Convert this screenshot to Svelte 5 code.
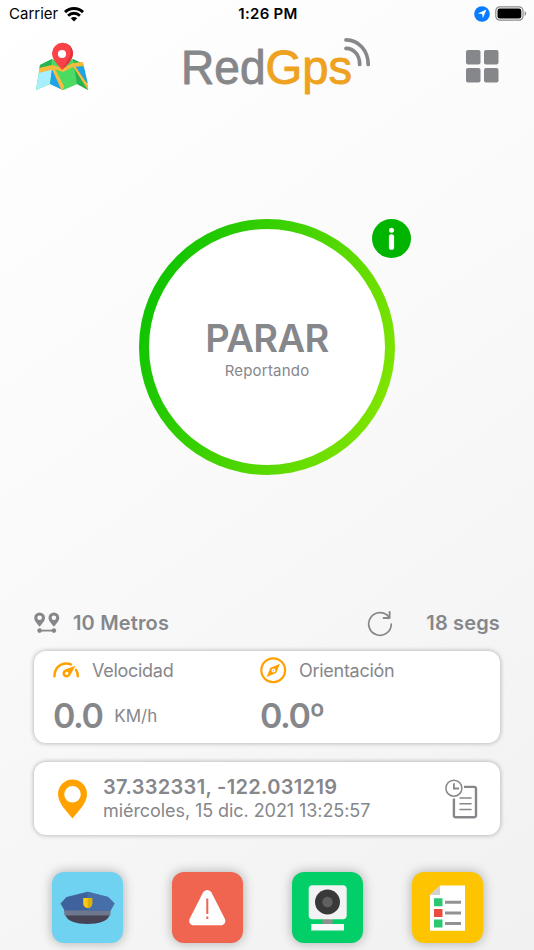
<script lang="ts">
  /** Tracker home — reporting toggle, current position and quick actions. */
  let reporting = $state(true);

  const distance = '10 Metros';
  const elapsed = '18 segs';
  const position = '37.332331, -122.031219';
  const date = 'miércoles, 15 dic. 2021 13:25:57';

  const actions = [
    { id: 'police', label: 'Policía', color: '#6fd2f0' },
    { id: 'alert', label: 'Alerta', color: '#f0654f' },
    { id: 'camera', label: 'Cámara', color: '#03cf69' },
    { id: 'tasks', label: 'Tareas', color: '#ffc400' },
  ];
</script>

<div class="screen">
  <div class="status">
    <div class="side">
      <span class="carrier">Carrier</span>
      <svg width="20" height="15" viewBox="0 0 20 15" fill="none" stroke="#000" stroke-width="2.9">
        <path d="M1 5.1a13 13 0 0 1 18 0" />
        <path d="M4.1 8.7a8.500 8.500 0 0 1 11.800 0" />
        <path d="M10 14.500 6.800 11.300a4.600 4.600 0 0 1 6.400 0z" fill="#000" stroke="none" />
      </svg>
    </div>
    <span class="time">1:26 PM</span>
    <div class="side right">
      <svg width="16" height="16" viewBox="0 0 16 16">
        <circle cx="8" cy="8" r="7.8" fill="#087cff" />
        <path d="M12.5 3.6 8.8 12.3 8.2 8.1 3.7 7.4z" fill="#fff" />
      </svg>
      <svg width="32" height="16" viewBox="0 0 32 16">
        <rect x=".8" y=".8" width="27.2" height="13.4" rx="4" fill="none" stroke="#8b8b8b" stroke-width="1.2" />
        <rect x="2.5" y="2.5" width="23.8" height="10" rx="2.3" />
        <path d="M29.6 5.2c2 .8 2 3.8 0 4.6z" fill="#8b8b8b" />
      </svg>
    </div>
  </div>

  <header>
    <button aria-label="Mapa">
      <svg width="54" height="50" viewBox="0 0 54 50">
        <path d="M5 23 17 17 28 22 38 17 48 22 53 48 42 42 28 48 15 42 1 48z" fill="#4cdb62" />
        <path d="M5 23 17 17 16 25 4 29z" fill="#27b351" />
        <path d="M4 30 17 27 15 42 1 48z" fill="#a7efff" />
        <path d="M17 27 28 48 15 42z" fill="#1ea2e9" />
        <path d="M28 22 38 17 42 42 28 48z" fill="#4cdb62" />
        <path d="M38 17 48 22 53 48 42 42z" fill="#27b351" />
        <path d="M39 24 49 25 53 42z" fill="#1ea2e9" />
        <path d="M4 26 17 23 28 26 38 21 48 20 49 24 38 25 28 30 19 27 4 31z" fill="#f8bb3c" />
        <path d="M16 25 19 25 29 44 28 48 26 47zM37 23 40 24 53 43V48z" fill="#f8bb3c" />
        <path d="M27 28C24 24 17 18 17 11.300a10.500 10.500 0 0 1 21 0C38 18 30 24 27 28z" fill="#fb4248" />
        <path d="M30 1.200c6.500 2.500 7.500 10.500 3 16.500l-6 10.300c7-6 11-11 11-16.700 0-5-3-9-8-10.100z" fill="#df343d" />
        <circle cx="27" cy="12" r="4.100" fill="#fff" />
      </svg>
    </button>

    <svg class="logo" width="194" height="62" viewBox="0 0 194 62">
      <text x="1" y="48.300" textLength="84.500" lengthAdjust="spacingAndGlyphs" fill="#86878a" stroke="#86878a">Red</text>
      <text x="85.500" y="48.300" textLength="86.500" lengthAdjust="spacingAndGlyphs" fill="#eea21f" stroke="#eea21f">Gps</text>
      <g fill="none" stroke="#86878a" stroke-width="3.700" stroke-linecap="round">
        <path d="M166 12.400C174 12.400 179.700 19 179.700 28.500" />
        <path d="M166 3.900C179 3.900 188.200 15 188.200 28.500" />
      </g>
    </svg>

    <button aria-label="Menú">
      <svg width="33" height="33" viewBox="0 0 33 33" fill="#86878b">
        <rect width="14.500" height="14.500" rx="2" />
        <rect x="18" width="14.500" height="14.500" rx="2" />
        <rect y="18" width="14.500" height="14.500" rx="2" />
        <rect x="18" y="18" width="14.500" height="14.500" rx="2" />
      </svg>
    </button>
  </header>

  <main>
    <div class="toggle">
      <button class="ring" onclick={() => (reporting = !reporting)}>
        <strong>{reporting ? 'PARAR' : 'INICIAR'}</strong>
        <span>{reporting ? 'Reportando' : 'Detenido'}</span>
      </button>
      <button class="info" aria-label="Información">
        <svg width="39" height="39" viewBox="0 0 39 39" fill="#fff">
          <circle cx="19.500" cy="19.500" r="19.500" fill="#00b400" />
          <circle cx="19.500" cy="11.300" r="2.500" />
          <rect x="16.900" y="15.200" width="5.200" height="15.600" rx="2.600" />
        </svg>
      </button>
    </div>
  </main>

  <div class="summary">
    <svg width="26" height="22" viewBox="0 0 26 22" fill="#86878b">
      <path fill-rule="evenodd" d="M5.600 .5A5.400 5.400 0 0 0 .2 6c0 3 3 5.700 5.400 8.800C8 11.700 11 9 11 6A5.400 5.400 0 0 0 5.600.5zm0 3a2.300 2.300 0 1 1 0 4.600 2.300 2.300 0 0 1 0-4.600z" />
      <path fill-rule="evenodd" d="M19.900 .5A5.400 5.400 0 0 0 14.500 6c0 3 3 5.700 5.400 8.800 2.400-3.100 5.400-5.800 5.400-8.800A5.400 5.400 0 0 0 19.900.5zm0 3a2.300 2.300 0 1 1 0 4.600 2.300 2.300 0 0 1 0-4.600z" />
      <circle cx="5.600" cy="18.600" r="2.300" />
      <circle cx="19.900" cy="18.600" r="2.300" />
      <path d="M5 17.700h15v1.800H5z" />
    </svg>
    <span class="distance">{distance}</span>
    <svg class="refresh" width="26" height="27" viewBox="0 0 26 27" fill="none" stroke="#86878b" stroke-width="1.700" stroke-linecap="round" stroke-linejoin="round">
      <path d="M24.300 14A11.300 11.300 0 1 1 21.900 7" />
      <path d="M22.600 2V8h-6" stroke-width="1.900" />
    </svg>
    <span class="elapsed">{elapsed}</span>
  </div>

  <section class="card metrics">
    <div class="metric">
      <div class="title">
        <svg width="27" height="27" viewBox="0 0 27 27" fill="none" stroke="#ffa000" stroke-width="2.500" stroke-linecap="round">
          <path d="M1.500 19.200C1.500 11.500 6.700 6.400 13.400 6.400c1.600 0 3 .3 4.400 1M23 12.900c1.200 1.800 1.800 3.900 1.800 6.300" />
          <path fill="#ffa000" fill-rule="evenodd" stroke="none" d="M22.400 8.700 17.700 17.500a4.200 4.200 0 1 1-5.600-5.100zM13.700 14.700a1.700 1.700 0 1 0 .1 3.400 1.700 1.700 0 0 0-.1-3.400z" />
        </svg>
        <span>Velocidad</span>
      </div>
      <div class="value"><strong>0.0</strong><span>KM/h</span></div>
    </div>
    <div class="metric">
      <div class="title">
        <svg width="27" height="27" viewBox="0 0 27 27">
          <circle cx="13.200" cy="13.200" r="11.900" fill="none" stroke="#ffa000" stroke-width="2.200" />
          <path fill="#ffa000" fill-rule="evenodd" d="M20 6.800 16.200 15.900 6.600 19.900 10.400 10.700zM13.500 11.500a2 2 0 1 0 0 4 2 2 0 0 0 0-4z" />
          <circle cx="13.500" cy="13.500" r=".7" fill="#ffa000" />
        </svg>
        <span>Orientación</span>
      </div>
      <div class="value"><strong>0.0º</strong></div>
    </div>
  </section>

  <section class="card location">
    <svg width="30" height="40" viewBox="0 0 30 40">
      <path fill="#ffa200" fill-rule="evenodd" d="M14.500.5A14.500 14.500 0 0 0 0 15c0 9 8 16.500 14.500 24.500C21 31.500 29 24 29 15A14.500 14.500 0 0 0 14.500.5zm0 6.500a8.300 8.300 0 1 1 0 16.600 8.300 8.300 0 0 1 0-16.600z" />
    </svg>
    <div class="where">
      <strong>{position}</strong>
      <span>{date}</span>
    </div>
    <button aria-label="Historial">
      <svg width="33" height="40" viewBox="0 0 33 40" fill="none" stroke="#86878b">
        <circle cx="8.900" cy="9.200" r="8" stroke-width="1.500" />
        <path d="M8.900 4.300v5.200h5.200" stroke-width="1.800" />
        <path d="M19 7.900h10.200a1.800 1.800 0 0 1 1.800 1.800v26.800a1.800 1.800 0 0 1-1.800 1.800H10.700a1.800 1.800 0 0 1-1.800-1.800V19.500" stroke-width="2.400" />
        <path d="M15 19h11M15 24.800h11M15 30.600h11" stroke-width="1.500" stroke-linecap="round" />
      </svg>
    </button>
  </section>

  <nav>
    {#each actions as action (action.id)}
      <button class="tile" style:background={action.color} aria-label={action.label}>
        <svg width="71" height="71" viewBox="0 0 71 71">
          {#if action.id === 'police'}
            <path d="M13.500 43h44c-1 6-11 9-22 9s-21-3-22-9z" fill="#454354" />
            <path d="M12 38h46.500v5.500H12.500z" fill="#6d778e" />
            <path d="M35.500 19.700 56 25 62.500 31.500 58.500 38.500h-46L8.500 31.500 14.500 25z" fill="#3f629d" />
            <path d="M35.500 19.700 56 25 62.500 31.500 58.500 38.500h-23z" fill="#466ea9" />
            <path d="M31.200 26h9v5.500c0 2.500-2 4.500-4.500 4.500s-4.500-2-4.500-4.500z" fill="#fac918" />
            <path d="M35.700 26h4.500v5.500c0 2.500-2 4.500-4.500 4.500z" fill="#deb005" />
          {:else if action.id === 'alert'}
            <path d="M31 20.500c2-3.500 6.500-3.500 8.500 0l13.200 26c1.700 3.500-.4 6.800-4 6.800H22c-3.800 0-5.900-3.300-4.200-6.800z" fill="#fff" />
            <path d="M34.300 26.500h2v15.500h-2zM34.300 44.500h2v2.500h-2z" fill="#f0654f" />
          {:else if action.id === 'camera'}
            <path d="M30.500 46h10v8h-10z" fill="#909090" />
            <rect x="16.700" y="13.300" width="38" height="34" rx="4" fill="#f3f3f3" />
            <circle cx="35.500" cy="30" r="12.500" fill="#393939" />
            <circle cx="35.500" cy="30" r="5.200" fill="#606060" />
            <path d="M19.300 52h32.700v6.500H19.300z" fill="#fafafa" />
          {:else}
            <path d="M28 13.500h25v45.300H18V23z" fill="#fff" />
            <path d="M28 13.500V23H18z" fill="#d1d1d1" />
            <path d="M22 26.300h8.500v8H22zM22 47.600h8.500v8H22z" fill="#2dc771" />
            <path d="M22 37h8.500v8H22z" fill="#e84c3d" />
            <path d="M33 28.700h16v3H33zM33 39.400h16v3H33zM33 50h16v3H33z" fill="#929292" />
          {/if}
        </svg>
      </button>
    {/each}
  </nav>
</div>

<style>
  :global(body) { margin: 0; }
  .screen {
    display: flex; flex-direction: column;
    box-sizing: border-box; width: 534px; height: 950px; overflow: hidden;
    background: linear-gradient(145deg, #fff 0%, #fafafa 42%, #f1f1f1 100%);
    color: #86878b;
    font-family: Inter, 'Liberation Sans', sans-serif;
  }
  button { padding: 0; border: 0; background: none; font: inherit; color: inherit; }
  svg { display: block; flex: none; }
  strong { font-weight: 600; }

  .status {
    display: flex; align-items: center;
    box-sizing: border-box; height: 27px; padding: 1px 7px 0 9px;
    color: #000; font-size: 15px; line-height: 20px;
  }
  .side { flex: 1; display: flex; align-items: center; gap: 6px; }
  .right { justify-content: flex-end; gap: 5px; }
  .time { font-weight: 600; letter-spacing: .3px; }

  header {
    display: flex; justify-content: space-between; align-items: flex-start;
    height: 76px; padding: 9px 35px 0;
  }
  header > button { margin-top: 6px; }
  header > button:last-child { margin-top: 14px; }
  .logo { margin-right: 1px; overflow: visible; }
  .logo text {
    font: 47.5px 'Liberation Sans', sans-serif;
    stroke-width: .9; stroke-linejoin: round;
  }

  main { display: flex; justify-content: center; padding-top: 107px; height: 380px; box-sizing: border-box; }
  .toggle { position: relative; width: 256px; height: 256px; }
  .ring {
    display: flex; flex-direction: column; align-items: center;
    box-sizing: border-box; width: 256px; height: 256px; padding-top: 86px;
    border: 10px solid transparent; border-radius: 50%;
    background:
      linear-gradient(#fff, #fff) padding-box,
      linear-gradient(110deg, #0bc300 8%, #83e500 92%) border-box;
  }
  .ring strong { font-size: 38px; line-height: 46px; letter-spacing: -.6px; }
  .ring span { font-size: 15px; line-height: 20px; letter-spacing: .2px; }
  .info { position: absolute; top: 0; left: 233px; }

  .summary {
    display: flex; align-items: center;
    height: 28px; margin-top: 117px; padding: 0 34px;
    font-size: 20px; font-weight: 600; letter-spacing: .15px;
  }
  .distance { margin-left: 13px; }
  .refresh { margin-left: auto; }
  .elapsed { width: 107px; text-align: right; }

  .card {
    box-sizing: border-box; margin: 0 34px;
    border-radius: 12px; background: #fff;
    box-shadow: 0 0 5px rgba(0, 0, 0, .32);
  }
  .metrics { display: flex; height: 92px; margin-top: 14px; padding: 6px 19px 0; }
  .metric { width: 207px; }
  .title { display: flex; align-items: center; gap: 12px; font-size: 18px; line-height: 27px; letter-spacing: -.28px; }
  .value { display: flex; align-items: center; gap: 12px; margin-top: 7px; }
  .value strong { font-size: 34px; line-height: 50px; letter-spacing: -1.5px; }
  .value span { font-size: 17px; }

  .location { display: flex; align-items: center; height: 73px; margin-top: 19px; padding: 0 22px 0 24px; }
  .where { flex: 1; display: flex; flex-direction: column; margin-left: 15px; }
  .where strong { font-size: 20px; line-height: 24px; letter-spacing: .33px; }
  .where span { font-size: 18px; line-height: 23px; letter-spacing: -.07px; }

  nav { display: flex; justify-content: space-between; margin-top: 37px; padding: 0 51.5px; }
  .tile { width: 71px; height: 71px; border-radius: 12px; box-shadow: 0 0 12px rgba(0, 0, 0, .3); }
</style>
